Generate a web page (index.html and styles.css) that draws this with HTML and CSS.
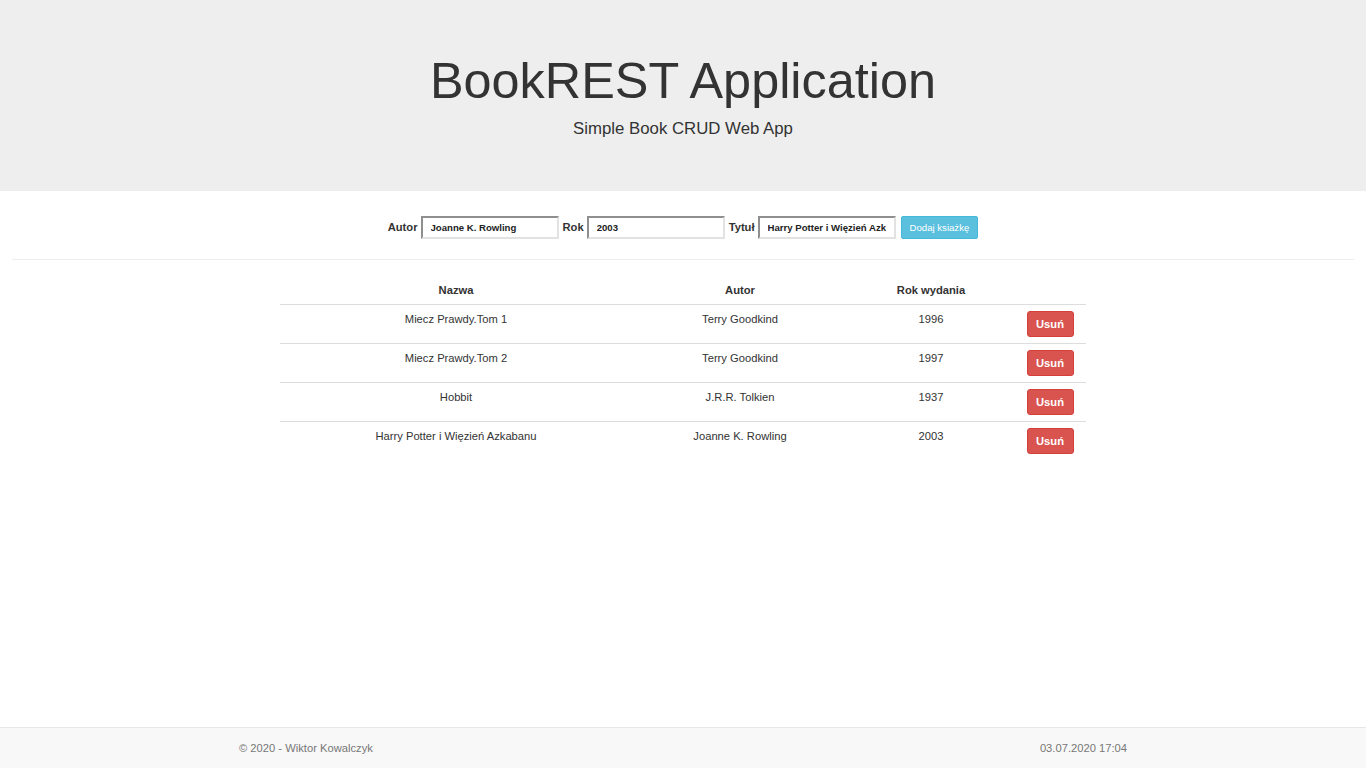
FILE: index.html
```html
<!DOCTYPE html>
<html lang="pl">
<head>
<meta charset="utf-8">
<title>BookREST Application</title>
<link rel="stylesheet" href="styles.css">
</head>
<body>
<div class="page">
  <header class="jumbotron">
    <h1>BookREST Application</h1>
    <p>Simple Book CRUD Web App</p>
  </header>
  <main class="content">
    <form class="add-form">
      <label>Autor</label>
      <input type="text" value="Joanne K. Rowling">
      <label>Rok</label>
      <input type="text" value="2003">
      <label>Tytuł</label>
      <input type="text" value="Harry Potter i Więzień Azkabanu">
      <button type="button" class="btn-info">Dodaj ksiażkę</button>
    </form>
    <hr class="divider">
    <table class="books">
      <thead>
        <tr><th class="c1">Nazwa</th><th class="c2">Autor</th><th class="c3">Rok wydania</th><th class="c4"></th></tr>
      </thead>
      <tbody>
        <tr><td>Miecz Prawdy.Tom 1</td><td>Terry Goodkind</td><td>1996</td><td><button type="button" class="btn-danger">Usuń</button></td></tr>
        <tr><td>Miecz Prawdy.Tom 2</td><td>Terry Goodkind</td><td>1997</td><td><button type="button" class="btn-danger">Usuń</button></td></tr>
        <tr><td>Hobbit</td><td>J.R.R. Tolkien</td><td>1937</td><td><button type="button" class="btn-danger">Usuń</button></td></tr>
        <tr><td>Harry Potter i Więzień Azkabanu</td><td>Joanne K. Rowling</td><td>2003</td><td><button type="button" class="btn-danger">Usuń</button></td></tr>
      </tbody>
    </table>
  </main>
  <footer class="footer">
    <span>© 2020 - Wiktor Kowalczyk</span>
    <span>03.07.2020 17:04</span>
  </footer>
</div>
</body>
</html>
```
FILE: styles.css
```css
* { box-sizing: border-box; }
html, body { margin: 0; padding: 0; height: 100%; }
body {
  font-family: "Liberation Sans", Arial, Helvetica, sans-serif;
  color: #333;
  background: #fff;
  font-size: 11.2px;
}
.page {
  min-height: 768px;
  height: 768px;
  display: flex;
  flex-direction: column;
}
.jumbotron {
  background: #eeeeee;
  height: 191px;
  padding-top: 51px;
  text-align: center;
}
.jumbotron h1 {
  margin: 0;
  font-size: 50.4px;
  font-weight: 400;
  line-height: 60px;
}
.jumbotron p {
  margin: 7px 0 0;
  font-size: 16.8px;
  line-height: 22px;
}
.content {
  flex: 1;
  padding: 0 12px;
}
.add-form {
  display: flex;
  justify-content: center;
  align-items: center;
  margin-top: 24px;
  height: 24px;
}
.add-form label {
  font-weight: 700;
  font-size: 11.2px;
  margin-left: 4px;
  margin-right: 3px;
}
.add-form label:first-child { margin-left: 0; }
.add-form input {
  width: 138px;
  height: 23px;
  border: 2px solid;
  border-color: #8f8f8f #e2e2e2 #e2e2e2 #8f8f8f;
  padding: 0 8px;
  font-family: inherit;
  font-size: 9.6px;
  font-weight: 700;
  color: #222;
  background: #fff;
}
.add-form .btn-info {
  margin-left: 5px;
  height: 23px;
  padding: 0 8px;
  background: #5bc0de;
  border: 1px solid #46b8da;
  border-radius: 2px;
  color: #fff;
  font-family: inherit;
  font-size: 9.6px;
}
.divider {
  border: 0;
  border-top: 1px solid #eee;
  margin: 20px 0 15px;
}
.books {
  width: 806px;
  margin: 0 auto;
  border-collapse: collapse;
}
.books th {
  font-weight: 700;
  font-size: 11.2px;
  text-align: center;
  height: 29px;
  padding: 0 6px 8px;
  vertical-align: bottom;
  border-bottom: 1px solid #ddd;
}
.books .c1 { width: 352px; }
.books .c2 { width: 216px; }
.books .c3 { width: 166px; }
.books .c4 { width: 72px; }
.books td {
  text-align: center;
  vertical-align: top;
  padding: 6px 6px 0;
  height: 39px;
  font-size: 11.2px;
  line-height: 16px;
  border-top: 1px solid #ddd;
}
.books tbody tr:first-child td { border-top: 0; }
.btn-danger {
  width: 47px;
  height: 26px;
  background: #d9534f;
  border: 1px solid #d43f3a;
  border-radius: 3px;
  color: #fff;
  font-family: inherit;
  font-size: 11.2px;
  font-weight: 700;
  padding: 0;
}
.footer {
  height: 41px;
  background: #f8f8f8;
  border-top: 1px solid #e7e7e7;
  display: flex;
  justify-content: space-between;
  align-items: center;
  padding: 0 239px;
  color: #777;
  font-size: 11.2px;
}
```
